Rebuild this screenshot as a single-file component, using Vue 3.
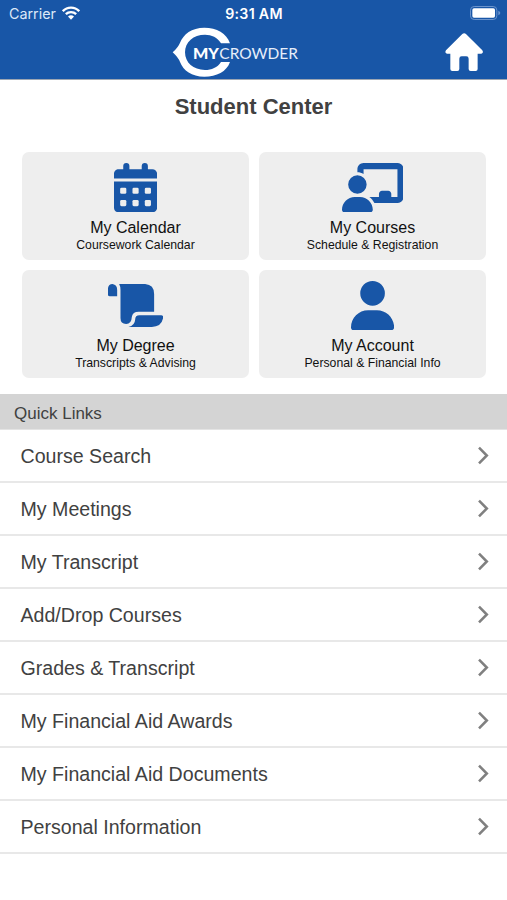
<script setup>
const tiles = [
  { icon: 'calendar', title: 'My Calendar', sub: 'Coursework Calendar' },
  { icon: 'courses', title: 'My Courses', sub: 'Schedule & Registration' },
  { icon: 'scroll', title: 'My Degree', sub: 'Transcripts & Advising' },
  { icon: 'user', title: 'My Account', sub: 'Personal & Financial Info' },
]
const links = [
  'Course Search',
  'My Meetings',
  'My Transcript',
  'Add/Drop Courses',
  'Grades & Transcript',
  'My Financial Aid Awards',
  'My Financial Aid Documents',
  'Personal Information',
]
</script>

<template>
  <div class="screen">
    <header class="header">
      <div class="status">
        <div class="carrier">
          <span>Carrier</span>
          <svg class="wifi" viewBox="0 0 54 42">
            <g fill="none" stroke="#fff" stroke-width="7">
              <path d="M2.500 15.500C16 1 38 1 51.500 15.500" />
              <path d="M11.500 24.500C20 16 34 16 42.500 24.500" />
            </g>
            <path d="M18 31.500Q27 24 36 31.500L27 41Z" fill="#fff" />
          </svg>
        </div>
        <div class="time">9:31 AM</div>
        <div class="power">
          <svg class="battery" viewBox="0 0 93 42">
            <rect x="1.500" y="1.500" width="79" height="39" rx="11" fill="none" stroke="#6a93cc" stroke-width="3" />
            <rect x="7" y="7" width="68" height="28" rx="5" fill="#fff" />
            <path d="M85 14Q91 17 91 21Q91 25 85 28Z" fill="#6a93cc" />
          </svg>
        </div>
      </div>
      <div class="brand-bar">
        <svg class="logo" viewBox="36 81 382 151">
          <path
            fill="#fff"
            d="M210 130C200 100 170 83 133 83C95 83 70 103 60 128Q55 141 38 157Q55 173 60 186C70 212 95 230 133 230C170 230 200 215 210 186H183C172 203 155 210 135 210C100 210 75 188 75 157C75 126 100 104 135 104C155 104 172 112 183 130Z"
          />
          <text x="99" y="176" textLength="78" lengthAdjust="spacingAndGlyphs" class="logo-bold">MY</text>
          <text x="178" y="176" textLength="236" lengthAdjust="spacingAndGlyphs" class="logo-text">CROWDER</text>
        </svg>
        <svg class="home" viewBox="345 98 115 115">
          <path
            fill="#fff"
            d="M397 101Q402.500 96 408 101L457 150Q462 158 454 160H443V206Q443 212 437 212H422Q416 212 416 206V175Q416 168 409 168H395Q388 168 388 175V206Q388 212 382 212H367Q361 212 361 206V160H351Q343 158 348 150Z"
          />
        </svg>
      </div>
    </header>

    <h1 class="title">Student Center</h1>

    <main class="tiles">
      <div v-for="t in tiles" :key="t.title" class="tile">
        <div class="icon-box">
          <svg v-if="t.icon === 'calendar'" class="icon" viewBox="0 0 448 512">
            <path
              d="M0 464c0 26.500 21.500 48 48 48h352c26.500 0 48-21.500 48-48V192H0v272zM400 64h-48V32a32 32 0 0 0-64 0v32H160V32a32 32 0 0 0-64 0v32H48C21.500 64 0 85.500 0 112v48h448v-48c0-26.500-21.500-48-48-48z"
            />
            <g fill="#eee">
              <template v-for="y in [256, 384]" :key="y">
                <rect v-for="x in [64, 192, 320]" :key="x" :x="x" :y="y" width="64" height="64" rx="14" />
              </template>
            </g>
          </svg>
          <svg v-else-if="t.icon === 'courses'" class="icon" viewBox="0 0 640 512">
            <path
              d="M160 64c0-35.300 28.700-64 64-64H576c35.300 0 64 28.700 64 64V352c0 35.300-28.700 64-64 64H336.800c-11.800-25.500-29.900-47.500-52.400-64H384V320c0-17.700 14.300-32 32-32h64c17.700 0 32 14.300 32 32v32h64V64L224 64v49.100C205.200 102.200 183.300 96 160 96V64zm0 64a96 96 0 1 1 0 192 96 96 0 1 1 0-192zM133.300 352h53.300C260.300 352 320 411.700 320 485.300c0 14.700-11.900 26.700-26.700 26.700H26.700C11.900 512 0 500.100 0 485.300C0 411.700 59.700 352 133.300 352z"
            />
          </svg>
          <svg v-else-if="t.icon === 'scroll'" class="icon" viewBox="292.500 65 168 148">
            <path
              d="M292 105V92Q292 74 306 74Q320 76 320 92V111H298Q292 111 292 105ZM326 74H404Q431 76 431 104V157H385Q366 157 364 173Q363 194 347 194Q330 194 330 176V92Q330 81 326 74ZM354 203Q373 198 374 181Q374 168 387 168H452Q459 168 458 176Q453 203 424 203Z"
            />
          </svg>
          <svg v-else class="icon" viewBox="0 0 448 512">
            <path
              d="M224 256A128 128 0 1 0 224 0a128 128 0 1 0 0 256zm-45.700 48C79.800 304 0 383.800 0 482.300C0 498.700 13.300 512 29.700 512H418.300c16.400 0 29.700-13.300 29.700-29.700C448 383.800 368.200 304 269.700 304H178.300z"
            />
          </svg>
        </div>
        <div class="tile-title">{{ t.title }}</div>
        <div class="tile-sub">{{ t.sub }}</div>
      </div>
    </main>

    <h2 class="section">Quick Links</h2>
    <ul class="links">
      <li v-for="l in links" :key="l" class="link">
        <span class="link-label">{{ l }}</span>
        <svg class="chevron" viewBox="0 0 12 20">
          <path d="M1.800 1.800L10 10L1.800 18.200" fill="none" stroke="#808080" stroke-width="2.700" />
        </svg>
      </li>
    </ul>
  </div>
</template>

<style>
body {
  margin: 0;
  background: #fff;
}
</style>

<style scoped>
.screen {
  height: 900px;
  overflow: hidden;
  background: #fff;
  color: #414141;
  font-family: 'Liberation Sans', Arial, sans-serif;
}
.header {
  box-sizing: border-box;
  height: 80px;
  background: #1856a7;
  border-bottom: 1px solid #9da6b3;
}
.status {
  display: grid;
  grid-template-columns: 1fr auto 1fr;
  align-items: center;
  height: 27px;
  padding: 0 7px 0 9px;
  font-family: Inter, sans-serif;
  color: #fff;
}
.carrier {
  display: flex;
  align-items: center;
  gap: 6px;
  font-size: 14.300px;
  color: #dce8f8;
}
.wifi {
  width: 18px;
  height: 14px;
  margin-bottom: 1px;
}
.time {
  margin-right: 1px;
  font-size: 14.200px;
  font-weight: 600;
  letter-spacing: 0.300px;
}
.power {
  display: flex;
  justify-content: flex-end;
  margin-right: -1px;
}
.battery {
  width: 31px;
  height: 14px;
  margin-bottom: 1px;
}
.brand-bar {
  display: flex;
  justify-content: space-between;
  padding: 0 23.500px 0 172px;
}
.logo {
  width: 127.300px;
  height: 50.300px;
}
.logo-bold,
.logo-text {
  font-family: Lato, sans-serif;
  font-size: 47px;
  fill: #fff;
}
.logo-bold {
  font-weight: 900;
}
.logo-text {
  fill: #e6eefa;
}
.home {
  width: 38.300px;
  height: 38.300px;
  margin-top: 5.700px;
}
.title {
  margin: 0;
  height: 71.500px;
  font-size: 22px;
  line-height: 53px;
  text-align: center;
}
.tiles {
  display: grid;
  grid-template-columns: 1fr 1fr;
  grid-auto-rows: 108.500px;
  gap: 9.500px 10px;
  padding: 0 21px 0 22px;
}
.tile {
  display: flex;
  flex-direction: column;
  align-items: center;
  padding-top: 11.500px;
  box-sizing: border-box;
  background: #eee;
  border-radius: 7px;
  color: #111;
}
.icon-box {
  height: 49.300px;
}
.icon {
  display: block;
  height: 100%;
  fill: #1856a7;
}
.tile-title {
  margin-top: 6.200px;
  font-size: 16px;
  line-height: 20px;
}
.tile-sub {
  margin-top: -0.700px;
  font-size: 12.250px;
  line-height: 14px;
}
.section {
  box-sizing: border-box;
  height: 36px;
  margin: 16px 0 0;
  padding-left: 14px;
  background: #d4d4d4;
  border-bottom: 1px solid #e4e4e4;
  font-size: 17px;
  font-weight: 400;
  line-height: 40px;
}
.links {
  margin: 0;
  padding: 0;
  list-style: none;
}
.link {
  display: flex;
  align-items: center;
  justify-content: space-between;
  box-sizing: border-box;
  height: 53px;
  padding: 0 18.500px 0 20.500px;
  border-bottom: 2px solid #e8e8e8;
  font-size: 19.600px;
}
.link-label {
  padding-top: 2px;
}
.chevron {
  width: 12px;
  height: 19px;
  margin-bottom: 1px;
}
</style>
